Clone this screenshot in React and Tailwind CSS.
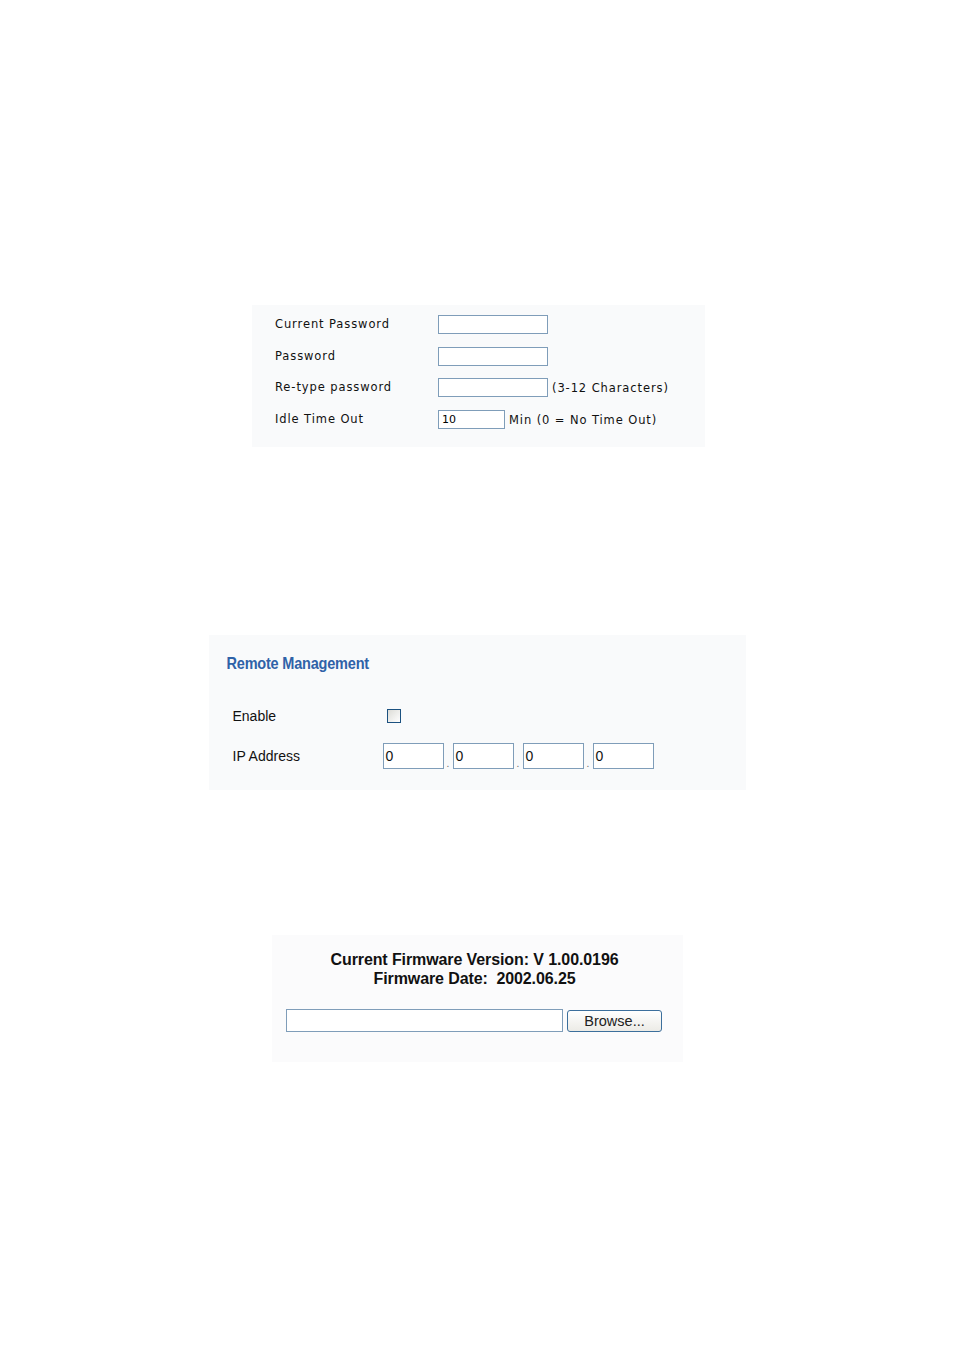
import React from 'react';

const field = 'h-[19px] border border-[#7f9db9] bg-white px-[3px] text-[11px] leading-[17px] text-black';

const PasswordPanel = () => {
  const rows = [
    { label: 'Current Password', width: 'w-[110px]' },
    { label: 'Password', width: 'w-[110px]' },
    { label: 'Re-type password', width: 'w-[110px]', note: '(3-12 Characters)' },
    { label: 'Idle Time Out', width: 'w-[67px]', value: '10', note: 'Min (0 = No Time Out)' },
  ];

  return (
    <div className="ml-[3px] w-[453px] h-[142px] bg-[#f9fafb] pt-[4px] pl-[23px] font-['DejaVu_Sans',sans-serif] text-[11.5px] tracking-[0.9px] text-[#111]">
      {rows.map((row) => (
        <div key={row.label} className="flex items-center h-[31.5px]">
          <span className="w-[163px] shrink-0">{row.label}</span>
          <div className={`${field} ${row.width} tracking-normal`}>{row.value}</div>
          {row.note && <span className="ml-[4px] mt-[2px]">{row.note}</span>}
        </div>
      ))}
    </div>
  );
};

const RemotePanel = () => (
  <div className="w-[537px] h-[155px] bg-[#f9fafb] pt-[19px] pl-[18px] font-['Liberation_Sans',sans-serif] text-[#111]">
    <h3 className="text-[14.5px] font-bold text-[#2f62a8] leading-[20px] tracking-[-0.2px] scale-y-[1.08] origin-left">Remote Management</h3>
    <div className="mt-[30px] flex items-center pl-[6px] h-[24px]">
      <span className="w-[154px] text-[14px]">Enable</span>
      <div className="w-[14px] h-[14px] border border-[#1c5180] bg-gradient-to-br from-[#dcdcd7] to-white" />
    </div>
    <div className="mt-[15px] flex items-center pl-[6px] h-[26px]">
      <span className="w-[150px] text-[14px]">IP Address</span>
      {[0, 1, 2, 3].map((i) => (
        <div key={i} className="flex items-end">
          {i > 0 && <span className="w-[9px] text-center text-[10px] leading-[10px] text-[#666]">.</span>}
          <div className="w-[61px] h-[26px] border border-[#7f9db9] bg-white pl-[2px] text-[14px] leading-[24px]">0</div>
        </div>
      ))}
    </div>
  </div>
);

const FirmwarePanel = () => (
  <div className="w-[411px] h-[127px] bg-[#fbfbfc] pt-[15px] font-['Liberation_Sans',sans-serif] text-[#111]">
    <div className="pr-[6px] text-center text-[16px] font-bold leading-[19px] tracking-[-0.1px]">
      <p>Current Firmware Version: V 1.00.0196</p>
      <p>Firmware Date:&nbsp; 2002.06.25</p>
    </div>
    <div className="mt-[21px] flex items-center pl-[14px] gap-[4px]">
      <div className="w-[277px] h-[23px] border border-[#7f9db9] bg-white" />
      <button className="w-[95px] h-[22px] rounded-[3px] border border-[#3c6f9c] bg-gradient-to-b from-white to-[#ecebe6] text-[14.5px] leading-[20px] text-[#222]">
        Browse...
      </button>
    </div>
  </div>
);

export default function App() {
  return (
    <div className="w-[954px] h-[1353px] bg-white flex flex-col items-center">
      <div className="mt-[305px]">
        <PasswordPanel />
      </div>
      <div className="mt-[188px]">
        <RemotePanel />
      </div>
      <div className="mt-[145px] ml-[1px]">
        <FirmwarePanel />
      </div>
    </div>
  );
}
